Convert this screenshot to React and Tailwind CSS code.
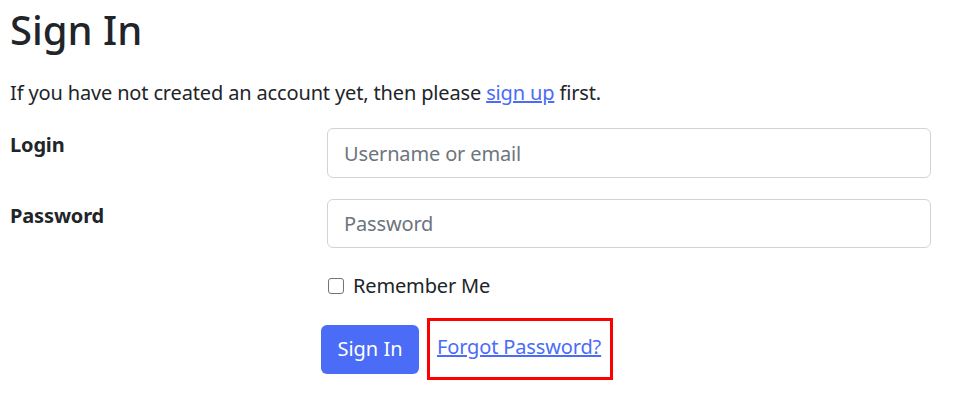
export default function App() {
  return (
    <div className="min-h-[412px] bg-white px-[10px] pt-[6px] text-[#212529]" style={{ fontFamily: '"Noto Sans", "Open Sans", sans-serif' }}>
      <h1 className="text-[40px] font-medium leading-[48px]">Sign In</h1>
      <p className="mt-[24px] text-[20px] leading-[30px] tracking-[-0.15px]">
        If you have not created an account yet, then please{' '}
        <a href="#" className="text-[#4a6cf7] underline">sign up</a> first.
      </p>

      <form className="mt-[20px]">
        <div className="flex items-start">
          <label className="w-[317px] shrink-0 pt-[2px] text-[20px] font-bold leading-[30px] tracking-[-0.15px]">Login</label>
          <input
            type="text"
            placeholder="Username or email"
            className="h-[50px] w-[604px] rounded-[6px] border border-[#ced4da] px-[16px] text-[20px] tracking-[-0.15px] placeholder:text-[#6c757d] outline-none"
          />
        </div>

        <div className="mt-[21px] flex items-start">
          <label className="w-[317px] shrink-0 pt-[2px] text-[20px] font-bold leading-[30px] tracking-[-0.15px]">Password</label>
          <input
            type="password"
            placeholder="Password"
            className="h-[49px] w-[604px] rounded-[6px] border border-[#ced4da] px-[16px] text-[20px] tracking-[-0.15px] placeholder:text-[#6c757d] outline-none"
          />
        </div>

        <div className="mt-[23px] flex items-center pl-[318px]">
          <input type="checkbox" className="h-[16px] w-[16px] appearance-none rounded-[3px] border border-[#6c757d] bg-white" />
          <label className="ml-[9px] text-[20px] leading-[30px] tracking-[-0.15px]">Remember Me</label>
        </div>

        <div className="mt-[17px] flex items-center pl-[311px]">
          <button type="button" className="h-[49px] w-[98px] rounded-[6px] bg-[#4a6cf7] text-[20px] text-white">
            Sign In
          </button>
          <div className="ml-[8px] flex h-[62px] w-[186px] items-center border-[3px] border-[#ff0000] pl-[7px] pb-[4px]">
            <a href="#" className="text-[20px] leading-[30px] tracking-[-0.15px] text-[#4a6cf7] underline">Forgot Password?</a>
          </div>
        </div>
      </form>
    </div>
  )
}
